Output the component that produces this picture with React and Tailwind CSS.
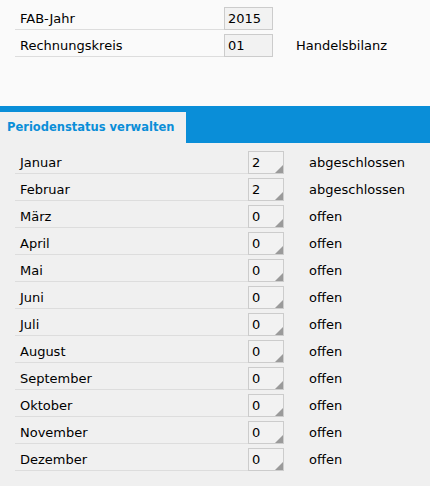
const months = [
  ['Januar', '2', 'abgeschlossen'],
  ['Februar', '2', 'abgeschlossen'],
  ['März', '0', 'offen'],
  ['April', '0', 'offen'],
  ['Mai', '0', 'offen'],
  ['Juni', '0', 'offen'],
  ['Juli', '0', 'offen'],
  ['August', '0', 'offen'],
  ['September', '0', 'offen'],
  ['Oktober', '0', 'offen'],
  ['November', '0', 'offen'],
  ['Dezember', '0', 'offen'],
];

function ValueBox({ value, wide, corner }) {
  return (
    <div
      className={`relative h-[23px] ${wide ? 'w-[49px]' : 'w-[36px]'} border border-[#cccccc] bg-[#f2f2f2] pl-[3px] pt-[1px] flex items-center`}
    >
      {value}
      {corner && (
        <span className="absolute right-0 bottom-0 w-0 h-0 border-l-[8px] border-l-transparent border-b-[8px] border-b-[#9a9a9a]" />
      )}
    </div>
  );
}

export default function App() {
  return (
    <div
      className="w-[430px] h-[486px] bg-[#f0f0f0] text-[13px] text-black flex flex-col"
      style={{ fontFamily: '"DejaVu Sans", Verdana, sans-serif' }}
    >
      {/* header fields */}
      <div className="bg-[#fafafa] pt-[7px] h-[106px]">
        <div className="flex items-start h-[27px]">
          <div className="w-[258px] ml-[15px] h-[23px] border-b border-[#dddddd] flex items-center justify-between">
            <span className="pl-[5px] pt-[1px]">FAB-Jahr</span>
            <ValueBox value="2015" wide />
          </div>
        </div>
        <div className="flex items-start h-[27px]">
          <div className="w-[258px] ml-[15px] h-[23px] border-b border-[#dddddd] flex items-center justify-between">
            <span className="pl-[5px] pt-[1px]">Rechnungskreis</span>
            <ValueBox value="01" wide />
          </div>
          <span className="ml-[23px] h-[23px] pt-[1px] flex items-center">Handelsbilanz</span>
        </div>
      </div>

      {/* tab bar */}
      <div className="bg-[#0a8ed8] h-[37px] pt-[6px] flex">
        <div className="w-[186px] bg-[#f0f0f0] pl-[7px] flex items-center font-bold text-[11.5px] text-[#0a8ed8]">
          Periodenstatus verwalten
        </div>
      </div>

      {/* months */}
      <div className="pt-[8px] flex flex-col">
        {months.map(([name, val, status]) => (
          <div key={name} className="flex items-start h-[27px]">
            <div className="w-[269px] ml-[15px] h-[23px] border-b border-[#dddddd] flex items-center justify-between">
              <span className="pl-[5px] pt-[1px]">{name}</span>
              <ValueBox value={val} corner />
            </div>
            <span className="ml-[25px] h-[23px] pt-[1px] flex items-center">{status}</span>
          </div>
        ))}
      </div>
    </div>
  );
}
